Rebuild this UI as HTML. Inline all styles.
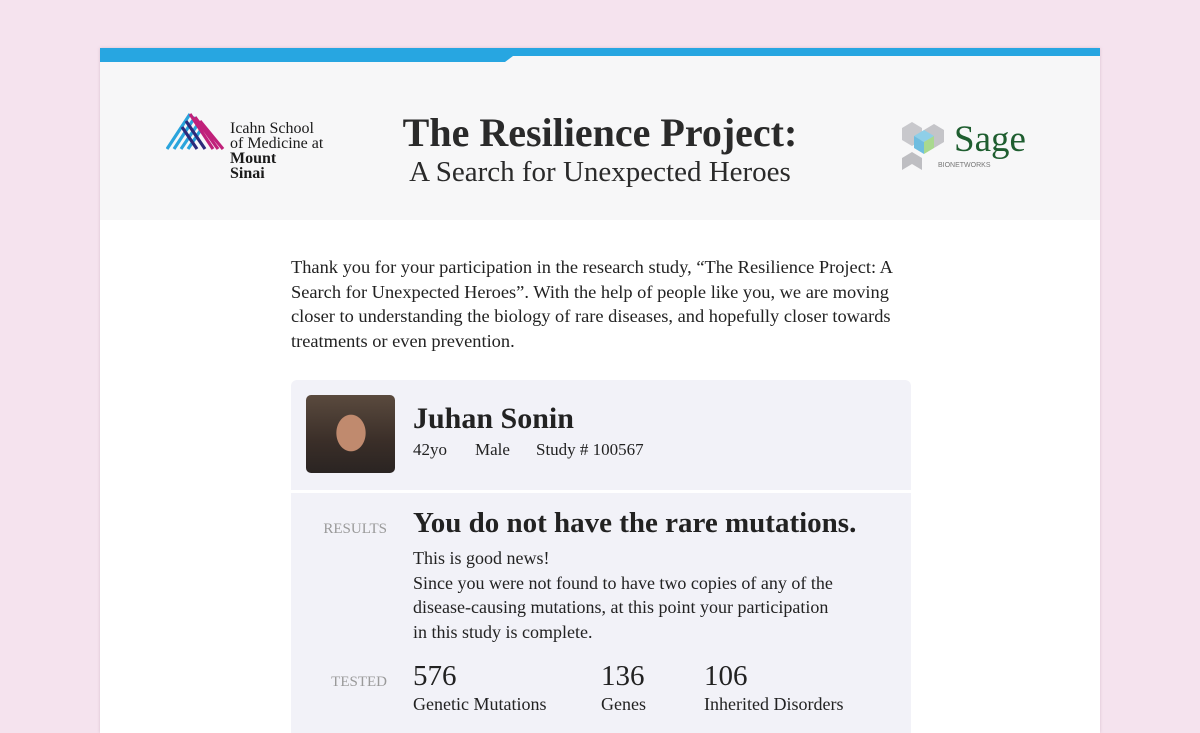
<!DOCTYPE html>
<html><head><meta charset="utf-8"><style>
*{margin:0;padding:0;box-sizing:border-box}
html,body{width:1200px;height:733px;overflow:hidden}
body{background:#f5e3ee;position:relative;font-family:"Liberation Serif",serif;color:#222}
.page{position:absolute;left:100px;top:48px;width:1000px;height:685px;background:#fff;box-shadow:0 0 3px rgba(180,140,160,.4)}
.bar1{position:absolute;left:0;top:0;width:1000px;height:8px;background:#27a6e1}
.bar2{position:absolute;left:0;top:0;width:405px;height:14px;background:#27a6e1;z-index:2}
.bar2:after{content:"";position:absolute;right:-8px;top:8px;border-top:6px solid #27a6e1;border-right:8px solid transparent}
.head{position:absolute;left:0;top:8px;width:1000px;height:164px;background:#f7f7f8}
.t1{position:absolute;left:0;width:1000px;text-align:center;top:53px;font-size:40px;font-weight:bold;color:#2a2a2a}
.t2{position:absolute;left:0;width:1000px;text-align:center;top:100px;font-size:29px;color:#2a2a2a}
.ms{position:absolute;left:130px;top:65px;font-size:16px;line-height:15px;color:#1a1a1a}
.intro{position:absolute;left:191px;top:207px;width:630px;font-size:18.4px;line-height:24.5px;color:#222}
.card{position:absolute;left:191px;top:332px;width:620px;height:353px;background:#f2f2f8;border-radius:6px 6px 0 0}
.sep{position:absolute;left:0;top:110px;width:620px;height:3px;background:#fff}
.photo{position:absolute;left:15px;top:15px;width:89px;height:78px;border-radius:5px;background:radial-gradient(ellipse 24px 30px at 45px 38px,#c08a6e 60%,transparent 62%),linear-gradient(#5a4a3e,#3a2e28 60%,#2a2422);overflow:hidden}
.name{position:absolute;left:122px;top:22px;font-size:30px;font-weight:bold;color:#222}
.meta{position:absolute;top:60px;font-size:17px}
.lbl{position:absolute;left:-15px;width:111px;text-align:right;font-size:15px;color:#9a9a9a}
.res{position:absolute;left:122px;top:127px;font-size:29px;font-weight:bold;color:#222}
.rt{position:absolute;left:122px;top:166px;font-size:18px;line-height:24.5px}
.num{position:absolute;top:280px;font-size:29px}
.nl{position:absolute;top:314px;font-size:18px}
</style></head><body>
<div class="page">
<div class="head">
<svg style="position:absolute;left:66px;top:56px" width="60" height="38" viewBox="0 0 60 38">
<g stroke-width="3.2" fill="none">
<path d="M1 37 L24 2 M8 37 L29 5 M15 37 L34 9 M22 37 L38 13" stroke="#2aa4dc"/>
<path d="M24 2 L47 37 M29 5 L52 37 M34 9 L57 37" stroke="#c0217a"/>
<path d="M20 9 L39 37 M16 15 L31 37" stroke="#2c2a7a"/>
</g></svg>
<div class="ms">Icahn School<br>of Medicine at<br><b>Mount<br>Sinai</b></div>
<div class="t1">The Resilience Project:</div>
<div class="t2">A Search for Unexpected Heroes</div>
<svg style="position:absolute;left:800px;top:64px" width="50" height="52" viewBox="0 0 50 52">
<path d="M2 8 L12 2 L22 8 L22 20 L12 26 L2 20Z" fill="#c8c8cc"/>
<path d="M24 10 L34 4 L44 10 L44 22 L34 28 L24 22Z" fill="#c4c4c8"/>
<path d="M14 16 L24 10 L34 16 L24 22Z" fill="#8fcfe8"/>
<path d="M14 16 L24 22 L24 34 L14 28Z" fill="#6fbde0"/>
<path d="M24 22 L34 16 L34 28 L24 34Z" fill="#a9d98f"/>
<path d="M12 32 L22 38 L22 50 L12 44 L2 50 L2 38Z" fill="#bebec2"/>
</svg>
<div style="position:absolute;left:854px;top:62px;font-size:37px;color:#1f5e30">Sage</div>
<div style="position:absolute;left:838px;top:106px;font-size:7px;color:#777;font-family:'Liberation Sans',sans-serif">BIONETWORKS</div>
</div>
<div class="bar1"></div><div class="bar2"></div>
<div class="intro">Thank you for your participation in the research study, “The Resilience Project: A Search for Unexpected Heroes”. With the help of people like you, we are moving closer to understanding the biology of rare diseases, and hopefully closer towards treatments or even prevention.</div>
<div class="card">
<div class="photo"></div>
<div class="name">Juhan Sonin</div>
<div class="meta" style="left:122px">42yo</div>
<div class="meta" style="left:184px">Male</div>
<div class="meta" style="left:245px">Study # 100567</div>
<div class="sep"></div>
<div class="lbl" style="top:141px">RESULTS</div>
<div class="res">You do not have the rare mutations.</div>
<div class="rt">This is good news!<br>Since you were not found to have two copies of any of the<br>disease-causing mutations, at this point your participation<br>in this study is complete.</div>
<div class="lbl" style="top:294px">TESTED</div>
<div class="num" style="left:122px">576</div><div class="nl" style="left:122px">Genetic Mutations</div>
<div class="num" style="left:310px">136</div><div class="nl" style="left:310px">Genes</div>
<div class="num" style="left:413px">106</div><div class="nl" style="left:413px">Inherited Disorders</div>
</div>
</div>
</body></html>
